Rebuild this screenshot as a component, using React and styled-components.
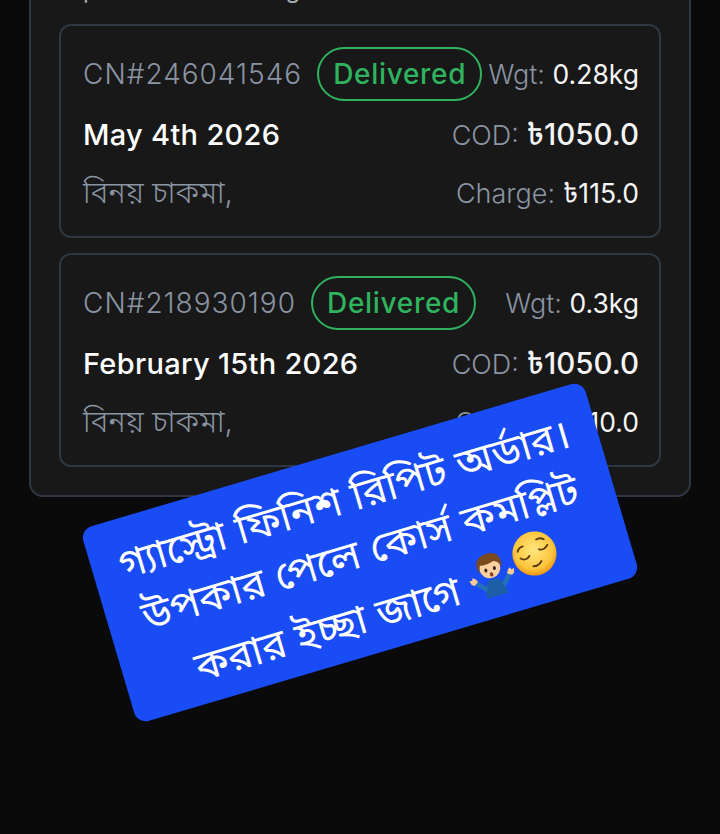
import styled, { createGlobalStyle } from 'styled-components'

const orders = [
  { id: 'CN#246041546', date: 'May 4th 2026', weight: '0.28kg', cod: '৳1050.0', charge: '৳115.0' },
  { id: 'CN#218930190', date: 'February 15th 2026', weight: '0.3kg', cod: '৳1050.0', charge: '৳110.0' },
]

const Global = createGlobalStyle`
  html, body { margin: 0; height: 100%; }
  body { background: #0a0a0a; overflow: hidden; font-family: Inter, "Noto Sans", "Noto Sans Bengali", sans-serif; }
`

const Page = styled.main`
  position: relative;
  width: 720px;
  height: 834px;
  overflow: hidden;
  padding: 0 29px;
  box-sizing: border-box;
`

const Panel = styled.section`
  margin-top: -27px;
  padding: 0 28px;
  height: 524px;
  box-sizing: border-box;
  background: #181818;
  border: 2px solid #2f3742;
  border-top: 0;
  border-radius: 0 0 14px 14px;
`

const Cut = styled.p`
  margin: 0 0 17px;
  padding-left: 24px;
  height: 34px;
  line-height: 34px;
  font-size: 24px;
  letter-spacing: 0.6px;
  color: #a4acb8;
`

const Card = styled.article`
  box-sizing: border-box;
  height: 214px;
  margin-bottom: 15px;
  padding: 21px 20px 0 22px;
  border: 2px solid #2f3742;
  border-radius: 12px;
  display: flex;
  flex-direction: column;
  gap: 10px;
`

const Row = styled.div`
  display: flex;
  align-items: ${p => (p.$tall ? 'center' : 'baseline')};
  justify-content: space-between;
  height: ${p => (p.$tall ? 54 : 48)}px;
  padding-top: ${p => (p.$tall ? 0 : 5)}px;
  box-sizing: border-box;
`

const Id = styled.span`
  font-size: 28px;
  font-weight: 300;
  letter-spacing: 1px;
  color: #8a94a3;
`

const Badge = styled.span`
  margin: 0 auto 0 15px;
  border: 2px solid #2fb35f;
  border-radius: 27px;
  padding: 0 14px;
  height: 54px;
  box-sizing: border-box;
  display: flex;
  align-items: center;
  font-size: 28px;
  font-weight: 500;
  letter-spacing: 0.7px;
  color: #2fb35f;
`

const Label = styled.span`
  font-size: 27px;
  font-weight: 300;
  color: #8a94a3;
  white-space: nowrap;
`

const Value = styled.span`
  color: #f5f5f5;
  font-size: ${p => p.$size || 26.5}px;
  font-weight: ${p => p.$weight || 400};
`

const DateText = styled.span`
  font-size: 29px;
  font-weight: 500;
  letter-spacing: 0.3px;
  color: #fff;
`

const Name = styled.span`
  font-size: 30px;
  font-weight: 300;
  color: #8a94a3;
`

const Sticker = styled.aside`
  position: absolute;
  left: 98px;
  top: 451px;
  width: 524px;
  height: 203px;
  box-sizing: border-box;
  padding-top: 17px;
  background: #1a4cf5;
  border-radius: 12px;
  transform: rotate(-16.5deg);
  color: #fff;
  font-size: 41px;
  line-height: 56px;
  text-align: center;
  font-weight: 400;
`

const Emoji = styled.svg`
  width: ${p => p.$size}px;
  height: ${p => p.$size}px;
  vertical-align: ${p => p.$lift}px;
`

const Shrug = () => (
  <Emoji $size={48} $lift={-3} viewBox="0 0 54 54">
    <path d="M15 53c-1-12 4-20 12-20s13 8 12 20z" fill="#1c5fa8" />
    <path d="M16 46L5 34l5-2 9 9zM38 46l11-12-5-2-9 9z" fill="#2470bb" />
    <path d="M2 33l-1-5 3 1 1-3 3 2 2 4-5 3zM52 33l1-5-3 1-1-3-3 2-2 4 5 3z" fill="#f6c896" />
    <circle cx="27" cy="20" r="12" fill="#fbd0a0" />
    <path d="M14 23C10 8 20 4 28 4c9 0 16 6 12 19-1-5-3-8-7-9-6 2-13 2-16 1-1 2-2 5-3 8z" fill="#7b4a1f" />
    <ellipse cx="22" cy="22" rx="1.7" ry="2.2" fill="#33241a" />
    <ellipse cx="32" cy="22" rx="1.7" ry="2.2" fill="#33241a" />
    <ellipse cx="27" cy="28" rx="2" ry="2.4" fill="#8a3f26" />
  </Emoji>
)

const Relieved = () => (
  <Emoji $size={46} $lift={5} viewBox="0 0 50 50">
    <defs>
      <radialGradient id="face" cx="50%" cy="42%" r="58%">
        <stop offset="0%" stopColor="#ffe680" />
        <stop offset="75%" stopColor="#fcc53c" />
        <stop offset="100%" stopColor="#ef9412" />
      </radialGradient>
    </defs>
    <circle cx="25" cy="25" r="24" fill="url(#face)" />
    <path d="M9 26c3 3 7 3 10 0M31 22c3 2 7 1 10-2M20 38c3 1 7 0 10-3M8 18c1-2 4-4 7-4M31 11c3-1 6 0 8 2" fill="none" stroke="#5a3a12" strokeWidth="2" strokeLinecap="round" />
  </Emoji>
)

export default function App() {
  return (
    <Page>
      <Global />
      <Panel>
        <Cut>previous checking</Cut>
        {orders.map(o => (
          <Card key={o.id}>
            <Row $tall>
              <Id>{o.id}</Id>
              <Badge>Delivered</Badge>
              <Label>Wgt: <Value>{o.weight}</Value></Label>
            </Row>
            <Row>
              <DateText>{o.date}</DateText>
              <Label>COD: <Value $size={29.5} $weight={500}>{o.cod}</Value></Label>
            </Row>
            <Row>
              <Name>বিনয় চাকমা,</Name>
              <Label>Charge: <Value>{o.charge}</Value></Label>
            </Row>
          </Card>
        ))}
      </Panel>
      <Sticker>
        গ্যাস্ট্রো ফিনিশ রিপিট অর্ডার।<br />
        উপকার পেলে কোর্স কমপ্লিট<br />
        করার ইচ্ছা জাগে <Shrug /><Relieved />
      </Sticker>
    </Page>
  )
}
